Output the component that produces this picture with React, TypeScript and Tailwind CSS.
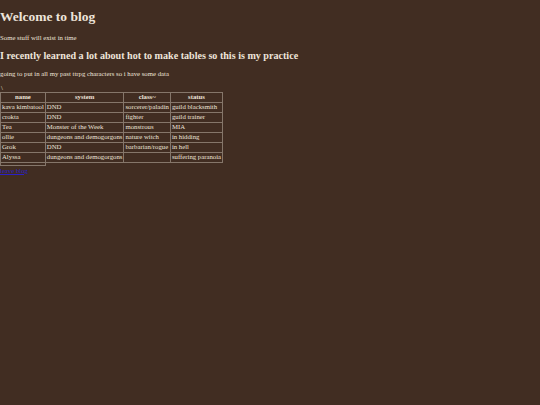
import React from "react";

const rows = [
  ["kava kimbatool", "DND", "sorcerer/paladin", "guild blacksmith"],
  ["crokta", "DND", "fighter", "guild trainer"],
  ["Tea", "Monster of the Week", "monstrous", "MIA"],
  ["ollie", "dungeons and demogorgons", "nature witch", "in hidding"],
  ["Grok", "DND", "barbarian/rogue", "in hell"],
  ["Alyssa", "dungeons and demogorgons", "", "suffering paranoia"],
];

export default function App() {
  return (
    <div className="min-h-[405px] w-full bg-[#412d22] text-[#eee4da] font-['Liberation_Serif',serif] overflow-hidden text-[6.75px] leading-[7.7px]">
      <div className="pt-[9px]">
        <h1 className="text-[13.5px] leading-[15.5px] font-bold m-0">Welcome to blog</h1>
        <p className="mt-[9px]">Some stuff will exist in time</p>
        <h2 className="text-[10.1px] leading-[11.6px] font-bold mt-[8.4px]">
          I recently learned a lot about hot to make tables so this is my practice
        </h2>
        <p className="mt-[8.4px]">going to put in all my past ttrpg characters so i have some data</p>
        <div className="mt-[6.7px] pl-[1px]">\</div>
        <table className="border-collapse leading-[8px]">
          <thead>
            <tr>
              {["name", "system", "class~", "status"].map((h) => (
                <th key={h} className="border border-[#85766a] px-[1px] py-[0.5px] font-bold text-center">
                  {h}
                </th>
              ))}
            </tr>
          </thead>
          <tbody>
            {rows.map((r, i) => (
              <tr key={i}>
                {r.map((c, j) => (
                  <td key={j} className="border border-[#85766a] px-[1px] py-[0.5px] text-left whitespace-nowrap">
                    {c}
                  </td>
                ))}
              </tr>
            ))}
            <tr>
              <td className="border border-[#85766a] h-[3px] p-0"></td>
            </tr>
          </tbody>
        </table>
        <div className="mt-[1px]">
          <a href="#" className="text-[#2a1fc8] underline">leave blog</a>
        </div>
      </div>
    </div>
  );
}
